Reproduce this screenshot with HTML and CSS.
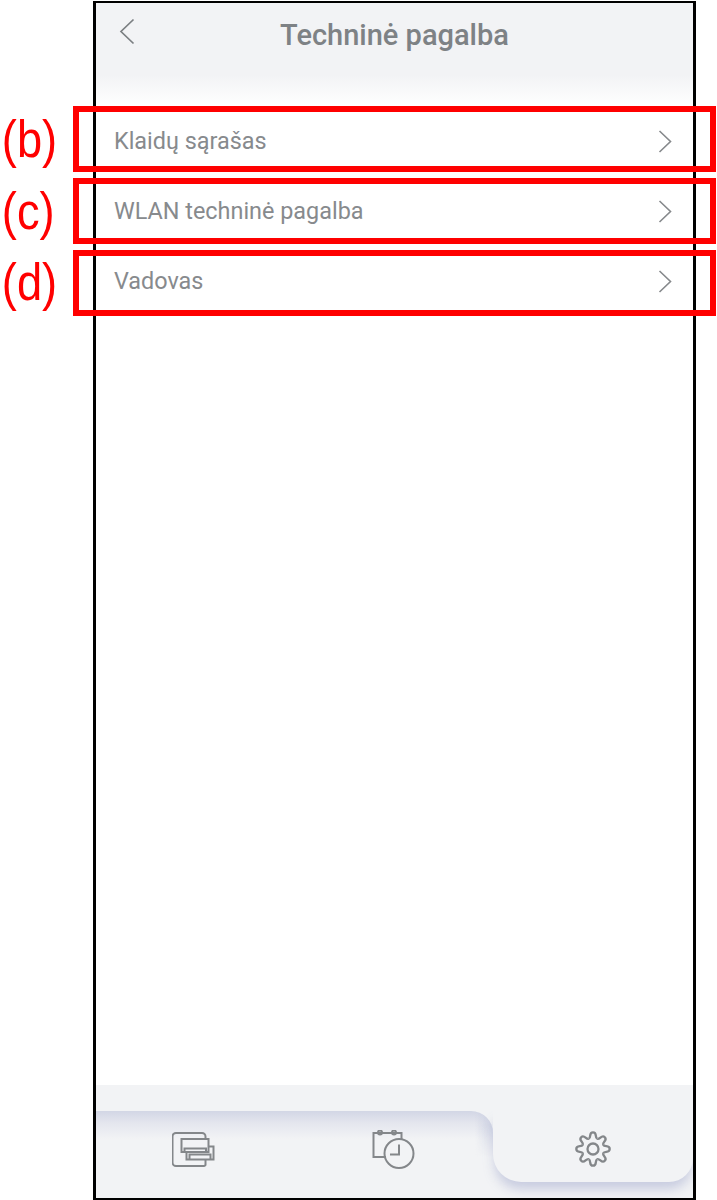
FILE: index.html
```html
<!DOCTYPE html>
<html lang="lt">
<head>
<meta charset="utf-8">
<title>Techninė pagalba</title>
<link rel="stylesheet" href="styles.css">
</head>
<body>
<div class="frame">
  <header class="header">
    <svg class="back" width="16" height="27" viewBox="0 0 16 27"><path d="M14.500 1.500 2 13.500l12.500 12"/></svg>
    <h1 class="title">Techninė pagalba</h1>
  </header>
  <main class="list">
    <div class="row"><span>Klaidų sąrašas</span><svg class="chev" width="14" height="23" viewBox="0 0 14 23"><path d="M1.500 1 12.500 11.500 1.500 22"/></svg></div>
    <div class="row"><span>WLAN techninė pagalba</span><svg class="chev" width="14" height="23" viewBox="0 0 14 23"><path d="M1.500 1 12.500 11.500 1.500 22"/></svg></div>
    <div class="row"><span>Vadovas</span><svg class="chev" width="14" height="23" viewBox="0 0 14 23"><path d="M1.500 1 12.500 11.500 1.500 22"/></svg></div>
  </main>
  <footer class="footer">
    <div class="tabs">
      <div class="tab">
        <svg class="icon" width="46" height="40" viewBox="172 1129 46 40">
          <path d="M181 1165h-5a3.500 3.500 0 0 1-3.500-3.500v-26a3.500 3.500 0 0 1 3.500-3.500h26a3.500 3.500 0 0 1 3.500 3.500v2.500"/>
          <path d="M176 1165h28a2 2 0 0 0 1.500-1v-5"/>
          <rect x="181.500" y="1138" width="27" height="13"/>
          <path d="M184.500 1151v-3.500h21.500v3.500"/>
          <path d="M208.500 1145.500h5v13h-27v-7.500"/>
          <path d="M189.500 1158.500v-5h21v5"/>
        </svg>
      </div>
      <div class="tab">
        <svg class="icon" width="46" height="40" viewBox="371 1129 46 40">
          <path d="M386 1156h-12.500v-24h28v7"/>
          <circle cx="380" cy="1131.500" r="2"/>
          <circle cx="394" cy="1131.500" r="2"/>
          <circle cx="399" cy="1152.500" r="14.500"/>
          <path d="M399 1143.500v10h-9"/>
        </svg>
      </div>
    </div>
    <div class="tab tab-active">
      <svg class="icon icon-gear" width="40" height="40" viewBox="-20 -19 40 40">
        <circle r="5.500"/>
        <path id="tooth" d="M-4.200-10.200C-1.500-11.500-4.500-16.700 0-16.700S1.500-11.500 4.200-10.200"/>
        <use href="#tooth" transform="rotate(45)"/>
        <use href="#tooth" transform="rotate(90)"/>
        <use href="#tooth" transform="rotate(135)"/>
        <use href="#tooth" transform="rotate(180)"/>
        <use href="#tooth" transform="rotate(225)"/>
        <use href="#tooth" transform="rotate(270)"/>
        <use href="#tooth" transform="rotate(315)"/>
      </svg>
    </div>
  </footer>
</div>
<div class="mark mark-b"></div>
<div class="mark mark-c"></div>
<div class="mark mark-d"></div>
<div class="tag tag-b">(b)</div>
<div class="tag tag-c">(c)</div>
<div class="tag tag-d">(d)</div>
</body>
</html>
```

FILE: styles.css
```css
html, body {
  margin: 0;
  padding: 0;
  background: #fff;
}
body {
  position: relative;
  height: 1200px;
  overflow: hidden;
  font-family: Roboto, "Liberation Sans", sans-serif;
}
.frame {
  box-sizing: border-box;
  display: flex;
  flex-direction: column;
  width: 603px;
  height: 1199px;
  margin: 1px 0 0 93px;
  border: solid #000;
  border-width: 2px 3px 2px 3px;
  background: #fff;
}
.header {
  position: relative;
  height: 103px;
  display: flex;
  justify-content: center;
  background: linear-gradient(#f2f3f5 0, #f2f3f5 72px, #fff 103px);
}
.back {
  position: absolute;
  left: 23px;
  top: 15px;
  fill: none;
  stroke: #7b7f82;
  stroke-width: 1.7;
}
.title {
  margin: 15px 0 0;
  font-size: 29px;
  line-height: 34px;
  font-weight: 500;
  color: #7e8285;
}
.list {
  flex: 1;
}
.row {
  height: 70px;
  display: flex;
  align-items: center;
  justify-content: space-between;
  padding: 0 21px 0 18px;
  font-size: 23.4px;
  color: #878a8d;
}
.chev {
  fill: none;
  stroke: #85888b;
  stroke-width: 1.6;
}
.footer {
  height: 113px;
  margin-top: -1px;
  display: flex;
  overflow: hidden;
  background: #f2f3f5;
}
.tabs {
  position: relative;
  overflow: hidden;
  flex: 1;
  display: flex;
  margin-top: 26px;
  border-top-right-radius: 22px;
  background: linear-gradient(#d2d6e5 0, #e4e6ee 12px, #f2f3f5 28px);
}
.tabs::after {
  content: "";
  position: absolute;
  top: 0;
  right: 0;
  width: 18px;
  height: 46px;
  background: linear-gradient(to left, #cdd1e2, rgba(205, 209, 226, 0));
  -webkit-mask-image: linear-gradient(#000 30%, transparent);
  mask-image: linear-gradient(#000 30%, transparent);
}
.tab {
  flex: 1;
  display: flex;
  justify-content: center;
  padding-top: 19px;
}
.tab-active {
  flex: 0 0 200px;
  margin: 26px 0 16px;
  border-radius: 0 0 24px 28px;
  background: #f2f3f5;
  box-shadow: 0 9px 12px -2px rgba(188, 193, 218, .8);
  clip-path: inset(0 0 -30px -30px);
}
.icon {
  display: block;
  fill: none;
  stroke: #84878a;
  stroke-width: 2;
}
.icon-gear {
  stroke-width: 2.300;
}
.mark {
  position: absolute;
  left: 73px;
  box-sizing: border-box;
  width: 643px;
  height: 66px;
  border: 6px solid #f00;
}
.mark-b { top: 106px; }
.mark-c { top: 178px; }
.mark-d { top: 250px; }
.tag {
  position: absolute;
  left: -2px;
  width: 59px;
  text-align: center;
  font-family: "Liberation Sans", Arial, sans-serif;
  font-size: 52px;
  line-height: 60px;
  color: #f00;
  transform: scaleX(.87);
}
.tag-b { top: 109px; }
.tag-c { top: 181px; }
.tag-d { top: 252px; }
```
